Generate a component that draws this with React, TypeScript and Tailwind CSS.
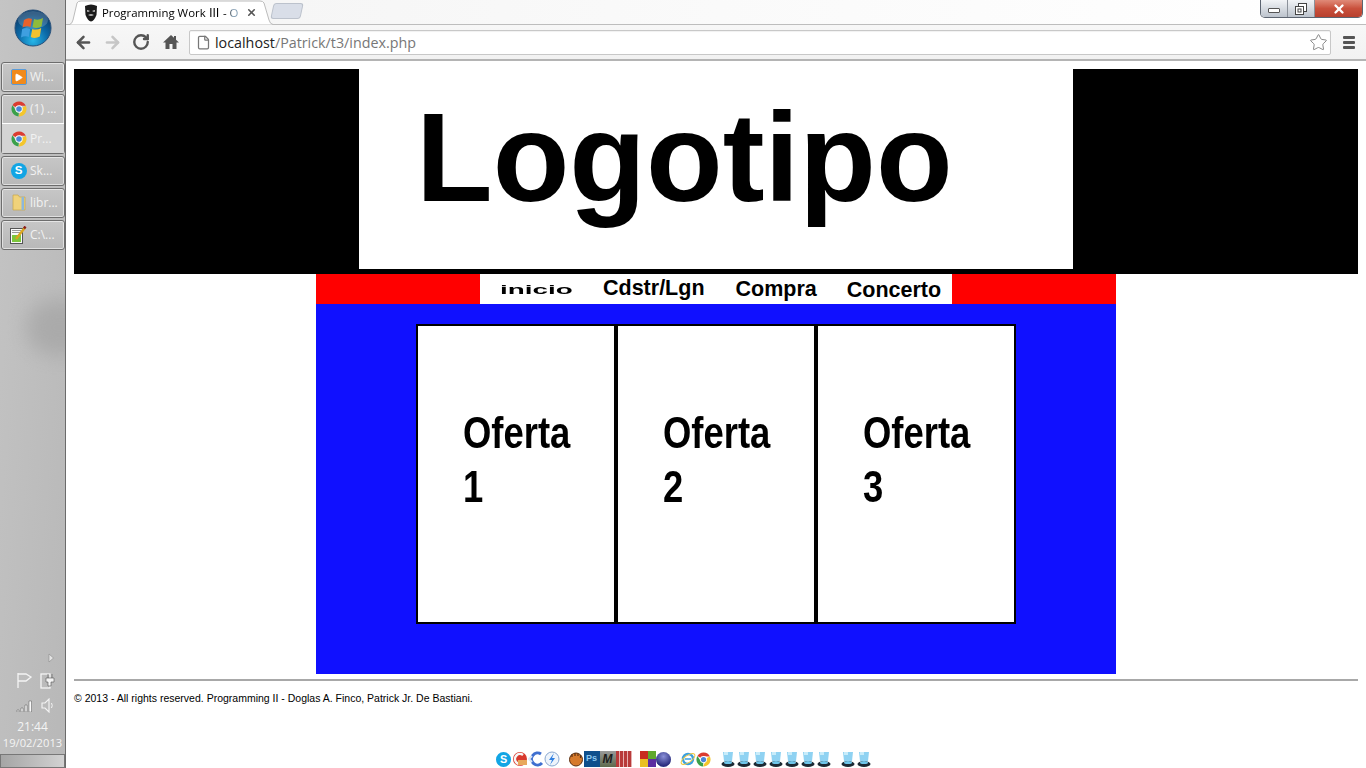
import { ArrowLeft, ArrowRight, RotateCw, File, Star, X, Play } from 'lucide-react';

function WinOrb() {
  return (
    <svg width="38" height="38" viewBox="0 0 38 38">
      <defs>
        <radialGradient id="orb" cx="50%" cy="85%" r="75%">
          <stop offset="0%" stopColor="#27b6e8" />
          <stop offset="55%" stopColor="#0c6aa8" />
          <stop offset="100%" stopColor="#0a3f6e" />
        </radialGradient>
      </defs>
      <circle cx="19" cy="19" r="18" fill="url(#orb)" stroke="#28507a" />
      <ellipse cx="19" cy="11" rx="15" ry="9" fill="#ffffff" opacity="0.18" />
      <path d="M10 11 Q14 8 18 10 L16.500 18 Q12.500 16.500 8.500 18.500 Z" fill="#e8622c" />
      <path d="M20 10 Q24 12 29 9 L27.500 17.500 Q23 20 18.500 18 Z" fill="#8fbb3c" />
      <path d="M8.200 20 Q12 18 16.200 20 L14.800 28 Q11 26.500 7 28.500 Z" fill="#3f9fe0" />
      <path d="M18.200 20 Q23 21.500 27.200 19 L25.800 27.500 Q21 30 16.800 28 Z" fill="#f2c230" />
    </svg>
  );
}

function ChromeIcon({ size = 16 }: { size?: number }) {
  return (
    <svg width={size} height={size} viewBox="0 0 16 16">
      <path d="M8 8 L1.500 4.200 A7.500 7.500 0 0 1 14.800 4.800 L8 4.800 Z" fill="#dc3c30" />
      <path d="M8 8 L14.800 4.800 A7.500 7.500 0 0 1 7.500 15.500 L11 8 Z" fill="#f4c62c" />
      <path d="M8 8 L7.500 15.500 A7.500 7.500 0 0 1 1.500 4.200 L5 9.500 Z" fill="#3aa04a" />
      <circle cx="8" cy="8" r="3.700" fill="#ffffff" />
      <circle cx="8" cy="8" r="2.800" fill="#4a86d8" />
    </svg>
  );
}

function SkypeIcon({ size = 16 }: { size?: number }) {
  return (
    <span
      className="flex items-center justify-center rounded-full bg-[#12a5e4] text-white font-bold font-['Liberation_Sans',sans-serif]"
      style={{ width: size, height: size, fontSize: size * 0.72 }}
    >
      S
    </span>
  );
}

function FolderIcon() {
  return (
    <svg width="14" height="18" viewBox="0 0 14 18">
      <path d="M1 1 h5 l1.500 2 h5.500 v13 h-12 Z" fill="#f0d27a" stroke="#c7a648" strokeWidth="0.700" />
      <rect x="9.500" y="3" width="2.500" height="13" fill="#8cb7dc" />
    </svg>
  );
}

function NotepadIcon() {
  return (
    <svg width="17" height="18" viewBox="0 0 17 18">
      <rect x="0.500" y="2.500" width="12" height="15" fill="#fafafa" stroke="#555" />
      <rect x="2" y="9" width="9" height="7" fill="#7cc63c" />
      <path d="M2 4.500 h9 M2 6.500 h9" stroke="#999" />
      <path d="M6 13 L15 1.500" stroke="#d9a520" strokeWidth="2.500" />
      <path d="M14 2.500 L15.500 0.500" stroke="#8a1c1c" strokeWidth="2.500" />
    </svg>
  );
}

function TaskItem({ icon, label, className }: { icon: React.ReactNode; label: string; className?: string }) {
  return (
    <div className={`flex items-center gap-[3px] pl-[8px] ${className ?? ''}`}>
      <span className="flex w-[17px] shrink-0 justify-center">{icon}</span>
      <span className="text-[12px] text-[#f2f2f2] font-['Open_Sans',sans-serif]">{label}</span>
    </div>
  );
}

function TaskButton({ children }: { children: React.ReactNode }) {
  return (
    <div className="ml-[1px] rounded-[3px] border border-[#6d6d6d] bg-gradient-to-b from-[#c6c6c6] to-[#b8b8b8] shadow-[inset_0_0_0_1px_rgba(255,255,255,0.55)]">
      {children}
    </div>
  );
}

function Sidebar() {
  return (
    <aside className="relative flex h-full w-[66px] shrink-0 flex-col overflow-hidden border-r border-r-[#6b6b6b] bg-gradient-to-br from-[#c4c4c4] via-[#bebebe] to-[#b8b8b8]">
      <div className="absolute left-[26px] top-[300px] h-[55px] w-[70px] rounded-full bg-[#a6a6a6] opacity-80 blur-[10px]" />
      <div className="relative flex h-[62px] shrink-0 items-center justify-center pb-[7px]">
        <WinOrb />
      </div>
      <div className="relative flex flex-col gap-[2px]">
        <TaskButton>
          <TaskItem
            label="Wi..."
            className="h-[28px]"
            icon={
              <span className="flex h-[16px] w-[16px] items-center justify-center rounded-[2px] border border-[#5a9bd8] bg-[#f08a1c]">
                <Play size={9} fill="#ffffff" stroke="#ffffff" />
              </span>
            }
          />
        </TaskButton>
        <TaskButton>
          <TaskItem label="(1) ..." icon={<ChromeIcon />} className="h-[29px] border-b border-b-white" />
          <TaskItem label="Pr..." icon={<ChromeIcon />} className="h-[29px] bg-[#d4d4d4]" />
        </TaskButton>
        <TaskButton>
          <TaskItem label="Sk..." icon={<SkypeIcon />} className="h-[28px]" />
        </TaskButton>
        <TaskButton>
          <TaskItem label="libr..." icon={<FolderIcon />} className="h-[28px]" />
        </TaskButton>
        <TaskButton>
          <TaskItem label="C:\..." icon={<NotepadIcon />} className="h-[28px]" />
        </TaskButton>
      </div>
      <div className="relative mt-auto flex flex-col items-center">
        <svg className="ml-[37px]" width="8" height="10" viewBox="0 0 8 10">
          <path d="M2 1 L6.500 5 L2 9 Z" fill="#e4e4e4" stroke="#8a8a8a" strokeWidth="0.600" />
        </svg>
        <div className="ml-[6px] mt-[9px] flex items-center gap-[7px]">
          <svg width="17" height="17" viewBox="0 0 17 17">
            <path d="M2 1 V16 M2 2 H10 L15 5 L10 9 H2" fill="none" stroke="#f4f4f4" strokeWidth="1.300" />
          </svg>
          <svg width="15" height="17" viewBox="0 0 15 17">
            <rect x="1" y="2" width="9" height="14" fill="none" stroke="#f4f4f4" strokeWidth="1.300" />
            <path d="M6 6 H14 V10 H11 V14 H8 V10 H6 Z M8 6 V2 M12 6 V2" fill="#f4f4f4" stroke="#555" strokeWidth="0.600" />
          </svg>
        </div>
        <div className="ml-[6px] mt-[9px] flex items-center gap-[8px]">
          <svg width="17" height="12" viewBox="0 0 17 12">
            <path d="M1 10 H3 V12 H1 Z M5 8 H7 V12 H5 Z M9 5 H11 V12 H9 Z M13 1 H15.500 V12 H13 Z" fill="#fafafa" stroke="#555" strokeWidth="0.500" />
          </svg>
          <svg width="14" height="15" viewBox="0 0 14 15">
            <path d="M1 5 H4 L8 1 V14 L4 10 H1 Z" fill="none" stroke="#f4f4f4" strokeWidth="1.100" />
            <path d="M10.500 5 Q12 7.500 10.500 10" fill="none" stroke="#f4f4f4" />
          </svg>
        </div>
        <span className="mt-[6px] text-[12px] leading-[16px] text-[#f4f4f4] font-['Open_Sans',sans-serif]">21:44</span>
        <span className="whitespace-nowrap text-[11.200px] leading-[16px] text-[#f4f4f4] font-['Open_Sans',sans-serif]">19/02/2013</span>
        <div className="mt-[3px] h-[14px] w-full border border-[#777] bg-gradient-to-r from-[#a5a5a5] to-[#d2d2d2]" />
      </div>
    </aside>
  );
}

function Mask() {
  return (
    <svg width="14" height="18" viewBox="0 0 14 18">
      <path d="M1 2 Q7 -1 13 2 L12.500 11 Q10 17 7 17.500 Q4 17 1.500 11 Z" fill="#1b1b1b" />
      <path d="M3 6 L6 7 L3.500 8 Z M11 6 L8 7 L10.500 8 Z M4 11 Q7 9.500 10 11 Q7 12.500 4 11 Z" fill="#e8e8e8" />
    </svg>
  );
}

function WindowButtons() {
  return (
    <div className="mr-[3px] flex h-[18px] overflow-hidden rounded-b-[5px] border border-t-0 border-[#5c6470]">
      <div className="flex w-[27px] items-center justify-center border-r border-r-[#8b919a] bg-gradient-to-b from-[#f2f4f7] to-[#bcc3cc]">
        <span className="mt-[4px] h-[5px] w-[12px] rounded-[1px] border border-[#555] bg-white" />
      </div>
      <div className="flex w-[27px] items-center justify-center border-r border-r-[#8b919a] bg-gradient-to-b from-[#f2f4f7] to-[#bcc3cc]">
        <svg width="12" height="12" viewBox="0 0 12 12">
          <rect x="3.500" y="0.500" width="8" height="8" fill="#fff" stroke="#444" />
          <rect x="0.500" y="3.500" width="8" height="8" fill="#fff" stroke="#444" />
          <rect x="3" y="6" width="3" height="3" fill="none" stroke="#444" />
        </svg>
      </div>
      <div className="flex w-[47px] items-center justify-center bg-gradient-to-b from-[#e08a78] via-[#c9503c] to-[#b8402e]">
        <X size={14} strokeWidth={4} className="text-white" />
      </div>
    </div>
  );
}

function BrowserChrome() {
  return (
    <div className="flex h-[61px] shrink-0 flex-col border-b-2 border-b-[#b4b4b4] bg-gradient-to-b from-[#fbfbfb] to-[#f2f2f2]">
      <div className="relative flex h-[25px] shrink-0 items-start justify-between bg-gradient-to-r from-[#f4f4f4] via-[#fafafa] to-[#ffffff]">
        <div className="absolute bottom-0 left-0 right-0 h-px bg-[#bdbdbd]" />
        <div className="relative ml-[2px] flex h-[25px] items-center">
          <svg className="absolute left-0 top-0" width="212" height="25" viewBox="0 0 212 25">
            <path d="M0 24.500 H1.500 Q4 24 5 20 L9 3 Q10 1 13 1 H192 Q195 1 196 3 L201 20 Q202 24 205 24.500 H212" fill="#ffffff" stroke="#bcbcbc" />
          </svg>
          <div className="relative flex items-center pl-[16px]">
            <Mask />
            <span className="ml-[4px] w-[142px] whitespace-nowrap bg-gradient-to-r from-black from-88% to-[#7f9ab0] to-92% bg-clip-text text-[11.400px] text-transparent font-['Open_Sans','Noto_Sans_CJK_SC',sans-serif]">
              Programming Work Ⅲ - O
            </span>
            <X size={11} strokeWidth={3.500} className="ml-[2px] text-[#555]" />
          </div>
          <div className="relative ml-[15px] mt-[-4px] h-[16px] w-[30px] -skew-x-12 rounded-[3px] border border-[#bcc2cc] bg-[#d9dee8]" />
        </div>
        <WindowButtons />
      </div>
      <div className="flex flex-1 items-center pl-[8px] pr-[11px]">
        <ArrowLeft size={19} strokeWidth={3.200} className="text-[#555]" />
        <ArrowRight size={19} strokeWidth={3.200} className="ml-[10px] text-[#c6c6c6]" />
        <RotateCw size={18} strokeWidth={3.200} className="ml-[10px] text-[#555]" />
        <svg className="ml-[13px]" width="16" height="16" viewBox="0 0 16 16">
          <path d="M8 1 L11 3.800 V2 H13 V5.700 L16 8.500 H13.500 V15 H9.500 V10 H6.500 V15 H2.500 V8.500 H0 Z" fill="#555" />
        </svg>
        <div className="ml-[10px] flex h-[25px] flex-1 items-center rounded-[2px] border border-[#c8c8c8] bg-white pl-[6px] pr-[2px] shadow-[inset_0_1px_1px_rgba(0,0,0,0.06)]">
          <File size={15} className="text-[#777]" />
          <span className="ml-[4px] mt-[1px] whitespace-nowrap text-[14.300px] font-['Open_Sans',sans-serif] text-[#777]">
            <span className="text-[#222]">localhost</span>/Patrick/t3/index.php
          </span>
          <Star size={19} strokeWidth={1.100} className="ml-auto text-[#777]" />
        </div>
        <div className="ml-[12px] flex w-[12px] flex-col gap-[2px]">
          <span className="h-[3px] rounded-[1px] bg-[#555]" />
          <span className="h-[3px] rounded-[1px] bg-[#555]" />
          <span className="h-[3px] rounded-[1px] bg-[#555]" />
        </div>
      </div>
    </div>
  );
}

function OfferCard({ n }: { n: number }) {
  return (
    <div className="h-[300px] w-[200px] border-2 border-black bg-white pl-[45px] pt-[80px]">
      <div className="origin-left scale-x-[0.81] whitespace-nowrap text-[45px] font-bold leading-[54px] text-black font-['Liberation_Sans',sans-serif]">
        <div>Oferta</div>
        <div>{n}</div>
      </div>
    </div>
  );
}

function HoloIcon() {
  return (
    <svg width="14" height="18" viewBox="0 0 14 18">
      <path d="M2 2 H12 L11 11 H3 Z" fill="#8fd2f2" />
      <path d="M3 2 H7 V5 H3 Z" fill="#c8ecfa" />
      <ellipse cx="7" cy="14" rx="6.500" ry="3" fill="#1c2a34" />
      <ellipse cx="7" cy="12.500" rx="4" ry="1.500" fill="#6fc6ea" />
    </svg>
  );
}

function Dock() {
  const cell = 'flex h-[16px] w-[16px] items-center justify-center overflow-hidden';
  return (
    <div className="absolute bottom-0 left-0 right-0 flex h-[18px] items-center justify-center">
      <div className="flex items-center">
        <div className="flex">
          <span className={cell}><SkypeIcon size={15} /></span>
          <span className={cell}>
            <svg width="16" height="16" viewBox="0 0 16 16">
              <circle cx="8" cy="8" r="7" fill="#d8382c" />
              <path d="M11 4 A5 5 0 1 0 11 12" fill="none" stroke="#f6f6f6" strokeWidth="2.500" />
              <rect x="6" y="9" width="9" height="5" fill="#e8a85c" />
            </svg>
          </span>
          <span className={cell}>
            <svg width="16" height="16" viewBox="0 0 16 16">
              <path d="M13 3 A6 6 0 1 0 14 12" fill="none" stroke="#3f6fd0" strokeWidth="3" />
              <path d="M4 5 L1 8 L4 11" fill="none" stroke="#dbe6f6" strokeWidth="2" />
            </svg>
          </span>
          <span className={cell}>
            <svg width="16" height="16" viewBox="0 0 16 16">
              <circle cx="8" cy="8" r="7" fill="#eef4fb" stroke="#8aa8d0" />
              <path d="M10 2 L5 9 H8 L6 14 L11 7 H8 Z" fill="#2f7fe0" />
            </svg>
          </span>
        </div>
        <div className="ml-[8px] flex">
          <span className={cell}>
            <svg width="16" height="16" viewBox="0 0 16 16">
              <circle cx="8" cy="8.500" r="6.500" fill="#d67a2c" stroke="#5c2f10" />
              <path d="M4 6 V3 M7 5 V2 M10 5 V2.500 M12.500 7 V4" stroke="#5c2f10" strokeWidth="1.200" />
            </svg>
          </span>
          <span className={`${cell} bg-[#0f4f8c] text-[9px] font-bold text-[#8cc8f0] font-['Liberation_Sans',sans-serif]`}>Ps</span>
          <span className={`${cell} bg-gradient-to-b from-[#9a9a9a] to-[#5e6a4c] text-[12px] font-bold italic text-[#1c1c1c] font-['Liberation_Sans',sans-serif]`}>M</span>
          <span className={`${cell} bg-[repeating-linear-gradient(90deg,#b83a3a_0px,#b83a3a_3px,#e6b0b0_3px,#e6b0b0_4px)]`} />
        </div>
        <div className="ml-[8px] flex">
          <span className="grid h-[16px] w-[16px] grid-cols-2">
            <span className="bg-[#c82c20]" />
            <span className="bg-[#5fa82c]" />
            <span className="bg-[#e8c020]" />
            <span className="bg-[#5c2ca0]" />
          </span>
          <span className={cell}>
            <span className="h-[15px] w-[15px] rounded-full bg-[radial-gradient(circle_at_50%_30%,#8a90d8,#2c2f80_70%)]" />
          </span>
        </div>
        <div className="ml-[8px] flex">
          <span className={cell}>
            <svg width="16" height="16" viewBox="0 0 16 16">
              <circle cx="8" cy="8" r="5" fill="none" stroke="#3aa0e0" strokeWidth="2.500" />
              <path d="M5 8 H11" stroke="#3aa0e0" strokeWidth="1.500" />
              <ellipse cx="8" cy="8" rx="8" ry="3.500" transform="rotate(-35 8 8)" fill="none" stroke="#f0c83c" />
            </svg>
          </span>
          <span className={cell}><ChromeIcon size={15} /></span>
        </div>
        <div className="ml-[9px] flex gap-[2px]">
          {[0, 1, 2, 3, 4, 5, 6].map((i) => <HoloIcon key={i} />)}
        </div>
        <div className="ml-[10px] flex gap-[2px]">
          {[0, 1].map((i) => <HoloIcon key={i} />)}
        </div>
      </div>
    </div>
  );
}

function Page() {
  return (
    <div className="flex flex-1 flex-col bg-white px-[8px] pt-[8px]">
      <header className="flex h-[205px] shrink-0 justify-center bg-black">
        <div className="flex h-[200px] w-[714px] items-center bg-white pb-[22px] pl-[57px]">
          <span className="text-[125.500px] font-bold leading-none text-black font-['Liberation_Sans',sans-serif]">Logotipo</span>
        </div>
      </header>
      <div className="mx-auto w-[800px]">
        <nav className="flex h-[30px] justify-center bg-[#ff0000]">
          <div className="flex w-[472px] items-center bg-white pl-[20px] text-[21.500px] font-bold leading-none text-black font-['Liberation_Sans',sans-serif]">
            <span className="inline-block w-[103px] origin-left scale-x-[1.64] scale-y-[0.8] text-[17px]">inicio</span>
            <span className="mb-[1px]">Cdstr/Lgn</span>
            <span className="ml-[31px] mt-[2px]">Compra</span>
            <span className="ml-[30px] mt-[4px]">Concerto</span>
          </div>
        </nav>
        <main className="flex h-[370px] justify-center bg-[#1010ff] pt-[20px]">
          <OfferCard n={1} />
          <OfferCard n={2} />
          <OfferCard n={3} />
        </main>
      </div>
      <footer className="mt-[5px]">
        <hr className="border-t-2 border-[#a8a8a8]" />
        <p className="mt-[11px] text-[10.500px] leading-[12px] text-black font-['Liberation_Sans',sans-serif]">
          © 2013 - All rights reserved. Programming II - Doglas A. Finco, Patrick Jr. De Bastiani.
        </p>
      </footer>
    </div>
  );
}

export default function App() {
  return (
    <div className="relative flex h-[768px] w-[1366px] overflow-hidden bg-white">
      <Sidebar />
      <div className="flex flex-1 flex-col">
        <BrowserChrome />
        <Page />
      </div>
      <Dock />
    </div>
  );
}
